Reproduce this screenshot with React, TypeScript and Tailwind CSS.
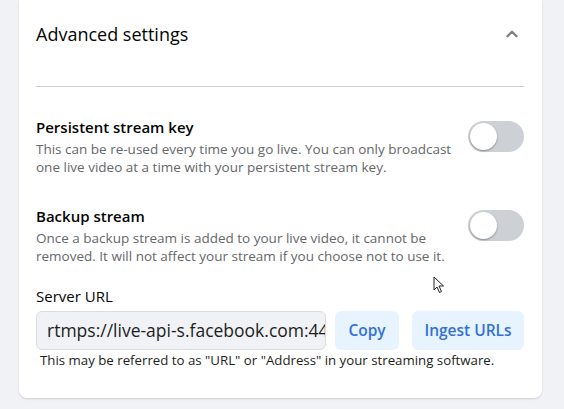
import { ChevronUp } from 'lucide-react'

const font = { fontFamily: '"Open Sans", "Noto Sans", sans-serif' }

function Toggle() {
  return (
    <div className="w-[56px] h-[31px] rounded-full bg-[#cdd0d4] p-[2px] flex items-center shrink-0">
      <div className="w-[27px] h-[27px] rounded-full bg-white shadow-[0_1px_2px_rgba(0,0,0,0.35)]" />
    </div>
  )
}

function SettingRow({ title, desc, className }: { title: string; desc: string[]; className?: string }) {
  return (
    <div className={`flex items-start justify-between ${className ?? ''}`}>
      <div>
        <p className="text-[15px] leading-[20px] font-semibold text-[#050505]">{title}</p>
        <p className="mt-[3px] text-[13.5px] leading-[18px] text-[#65676b]">
          {desc.map((line) => (
            <span key={line} className="block">{line}</span>
          ))}
        </p>
      </div>
      <div className="mt-[4px]">
        <Toggle />
      </div>
    </div>
  )
}

export default function App() {
  return (
    <div className="w-[564px] h-[409px] bg-[#f0f2f5] px-[19px] relative overflow-hidden" style={font}>
      <div className="w-[523px] bg-white rounded-b-lg shadow-[0_1px_2px_rgba(0,0,0,0.15)] pl-[17px] pr-[18px] pb-[30px]">
        {/* header */}
        <div className="pt-[24px] flex items-center justify-between">
          <h2 className="text-[18px] leading-[20px] font-medium text-[#050505]">Advanced settings</h2>
          <ChevronUp size={18} strokeWidth={3.2} className="text-[#7d8085] mr-[3px]" />
        </div>
        <div className="mt-[42px] h-px bg-[#ced0d4]" />

        <SettingRow
          className="mt-[30px]"
          title="Persistent stream key"
          desc={[
            'This can be re-used every time you go live. You can only broadcast',
            'one live video at a time with your persistent stream key.',
          ]}
        />
        <SettingRow
          className="mt-[30px]"
          title="Backup stream"
          desc={[
            'Once a backup stream is added to your live video, it cannot be',
            'removed. It will not affect your stream if you choose not to use it.',
          ]}
        />

        {/* server url */}
        <p className="mt-[21px] text-[15px] leading-[20px] font-medium text-[#050505]">Server URL</p>
        <div className="mt-[5px] flex items-center">
          <div className="w-[290px] h-[39px] rounded-md bg-[#f0f2f5] border border-[#dadde1] pl-[10px] pr-[4px] flex items-center overflow-hidden">
            <span className="text-[17.5px] text-[#1c1e21] whitespace-nowrap">rtmps://live-api-s.facebook.com:443</span>
          </div>
          <button className="ml-[9px] w-[64px] h-[39px] rounded-md bg-[#e7f3ff] text-[15.5px] font-semibold text-[#3471d3]">Copy</button>
          <button className="ml-[13px] w-[112px] h-[39px] rounded-md bg-[#e7f3ff] text-[15.5px] font-semibold text-[#3471d3]">Ingest URLs</button>
        </div>
        <p className="mt-[2px] pl-[4px] text-[13.25px] leading-[16px] text-[#1c1e21]">
          This may be referred to as "URL" or "Address" in your streaming software.
        </p>
      </div>

      {/* mouse pointer */}
      <svg className="absolute left-[433px] top-[276px]" width="12" height="18" viewBox="0 0 12 18">
        <path d="M1 1 L1 14 L4 11 L6.5 16.5 L8.5 15.5 L6 10 L10.5 10 Z" fill="white" stroke="#222" strokeWidth="1" strokeLinejoin="round" />
      </svg>
    </div>
  )
}
